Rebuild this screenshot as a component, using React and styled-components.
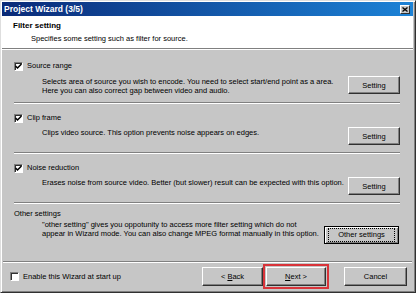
import React from 'react';
import styled, { createGlobalStyle, css } from 'styled-components';

const face = '#c6c6c6';

const Global = createGlobalStyle`
  html, body { margin: 0; padding: 0; background: ${face}; }
  body {
    font-family: "Liberation Sans", Arial, sans-serif;
    font-size: 7.5px;
    color: #000;
  }
  * { box-sizing: border-box; }
`;

const Window = styled.div`
  width: 416px;
  height: 293px;
  display: flex;
  flex-direction: column;
  background: ${face};
  border-top: 1px solid #dedede;
  border-left: 1px solid #dedede;
  border-right: 1px solid #303030;
  border-bottom: 1px solid #303030;
  box-shadow: inset 1px 1px 0 #fff, inset -1px -1px 0 #808080;
  padding: 1px 2px 2px 1px;
`;

const TitleBar = styled.div`
  height: 14px;
  flex: none;
  display: flex;
  align-items: center;
  justify-content: space-between;
  padding: 0 3px 0 2px;
  background: linear-gradient(to right, #0a2a78, #1c82d6);
  color: #fff;
  font-weight: bold;
  font-size: 8.5px;
`;

const CloseBox = styled.div`
  width: 10px;
  height: 9px;
  display: flex;
  align-items: center;
  justify-content: center;
  background: ${face};
  border-top: 1px solid #fff;
  border-left: 1px solid #fff;
  border-right: 1px solid #303030;
  border-bottom: 1px solid #303030;
`;

const Header = styled.div`
  height: 33px;
  flex: none;
  background: #fff;
  padding: 5px 0 0 11px;
  border-bottom: 1px solid #808080;
  box-shadow: 0 1px 0 #fff;
`;

const HeaderTitle = styled.div`
  font-weight: bold;
  font-size: 8px;
  line-height: 10px;
`;

const HeaderSub = styled.div`
  margin-top: 3px;
  padding-left: 18px;
  line-height: 10px;
`;

const Body = styled.div`
  padding: 0 12px 0 11px;
  border-bottom: 1px solid #808080;
  box-shadow: 0 1px 0 #fff;
  margin: 0 1px 1px 1px;
`;

const Section = styled.div`
  padding: ${p => (p.first ? '12px 0 7px' : '9px 0 7px')};
  border-bottom: 1px solid #808080;
  box-shadow: 0 1px 0 #fff;
  margin-bottom: 1px;
`;

const OtherSection = styled.div`
  padding: 5px 0 17px;
`;

const CheckRow = styled.label`
  display: flex;
  align-items: center;
  gap: 4px;
  height: 10px;
  line-height: 10px;
`;

const Box = styled.span`
  width: 9px;
  height: 9px;
  flex: none;
  display: flex;
  align-items: center;
  justify-content: center;
  background: #fff;
  border-top: 1px solid #808080;
  border-left: 1px solid #808080;
  border-right: 1px solid #fff;
  border-bottom: 1px solid #fff;
  box-shadow: inset 1px 1px 0 #303030;
`;

const DescRow = styled.div`
  display: flex;
  align-items: flex-start;
  margin-top: ${p => p.gap}px;
  padding-left: 28px;
`;

const Desc = styled.div`
  flex: 1;
  line-height: 9px;
  padding-top: 1px;
`;

const raised = css`
  background: ${face};
  border-top: 1px solid #fff;
  border-left: 1px solid #fff;
  border-right: 1px solid #303030;
  border-bottom: 1px solid #303030;
  box-shadow: inset -1px -1px 0 #808080;
  font-family: inherit;
  font-size: 7.5px;
  color: #000;
  padding: 0;
  display: flex;
  align-items: center;
  justify-content: center;
  white-space: pre;
`;

const Button = styled.button`
  ${raised};
  width: ${p => p.w || 52}px;
  height: ${p => p.h || 18}px;
  flex: none;
  margin-left: ${p => p.left || 0}px;
  ${p => p.marked && css`
    outline: 2px solid #d8343a;
    outline-offset: 1px;
  `}
`;

const DefaultButton = styled.button`
  ${raised};
  width: 75px;
  height: 18px;
  flex: none;
  margin-top: 7px;
  margin-right: 1px;
  border: 1px solid #000;
  box-shadow: inset 1px 1px 0 #fff, inset -1px -1px 0 #808080;
`;

const Focus = styled.span`
  border: 1px dotted #000;
  padding: 2px 4px;
  line-height: 8px;
  width: 67px;
  text-align: center;
`;

const Footer = styled.div`
  flex: 1;
  display: flex;
  align-items: center;
  padding: 0 6px 0 8px;
`;

const Buttons = styled.div`
  margin-left: auto;
  display: flex;
  align-items: center;
`;

const U = styled.span`
  text-decoration: underline;
`;

const Check = ({ checked }) => (
  <Box>
    {checked && (
      <svg width="7" height="7" viewBox="0 0 7 7">
        <path d="M0.5 3 L2.5 5 L6.5 1" stroke="#000" strokeWidth="1.5" fill="none" />
      </svg>
    )}
  </Box>
);

const sections = [
  {
    label: 'Source range',
    gap: 5,
    text: [
      'Selects area of source you wish to encode. You need to select start/end point as a area.',
      'Here you can also correct gap between video and audio.',
    ],
  },
  {
    label: 'Clip frame',
    gap: 4,
    text: ['Clips video source. This option prevents noise appears on edges.'],
  },
  {
    label: 'Noise reduction',
    gap: 4,
    text: ['Erases noise from source video. Better (but slower) result can be expected with this option.'],
  },
];

export default function App() {
  return (
    <>
      <Global />
      <Window>
        <TitleBar>
          <span>Project Wizard (3/5)</span>
          <CloseBox>
            <svg width="6" height="5" viewBox="0 0 6 5">
              <path d="M0.5 0.5 L5.5 4.5 M5.5 0.5 L0.5 4.5" stroke="#000" strokeWidth="1.3" />
            </svg>
          </CloseBox>
        </TitleBar>
        <Header>
          <HeaderTitle>Filter setting</HeaderTitle>
          <HeaderSub>Specifies some setting such as filter for source.</HeaderSub>
        </Header>
        <Body>
          {sections.map((s, i) => (
            <Section key={s.label} first={i === 0}>
              <CheckRow>
                <Check checked />
                {s.label}
              </CheckRow>
              <DescRow gap={s.gap}>
                <Desc>
                  {s.text.map(t => (
                    <div key={t}>{t}</div>
                  ))}
                </Desc>
                <Button>Setting</Button>
              </DescRow>
            </Section>
          ))}
          <OtherSection>
            <CheckRow>Other settings</CheckRow>
            <DescRow gap={0}>
              <Desc>
                <div>"other setting" gives you oppotunity to access more filter setting which do not</div>
                <div>appear in Wizard mode. You can also change MPEG format manually in this option.</div>
              </Desc>
              <DefaultButton>
                <Focus>Other settings</Focus>
              </DefaultButton>
            </DescRow>
          </OtherSection>
        </Body>
        <Footer>
          <CheckRow>
            <Check />
            Enable this Wizard at start up
          </CheckRow>
          <Buttons>
            <Button w={61} h={19}>{'< '}<U>B</U>ack</Button>
            <Button w={60} h={19} left={3} marked><U>N</U>{'ext >'}</Button>
            <Button w={63} h={19} left={18}>Cancel</Button>
          </Buttons>
        </Footer>
      </Window>
    </>
  );
}
